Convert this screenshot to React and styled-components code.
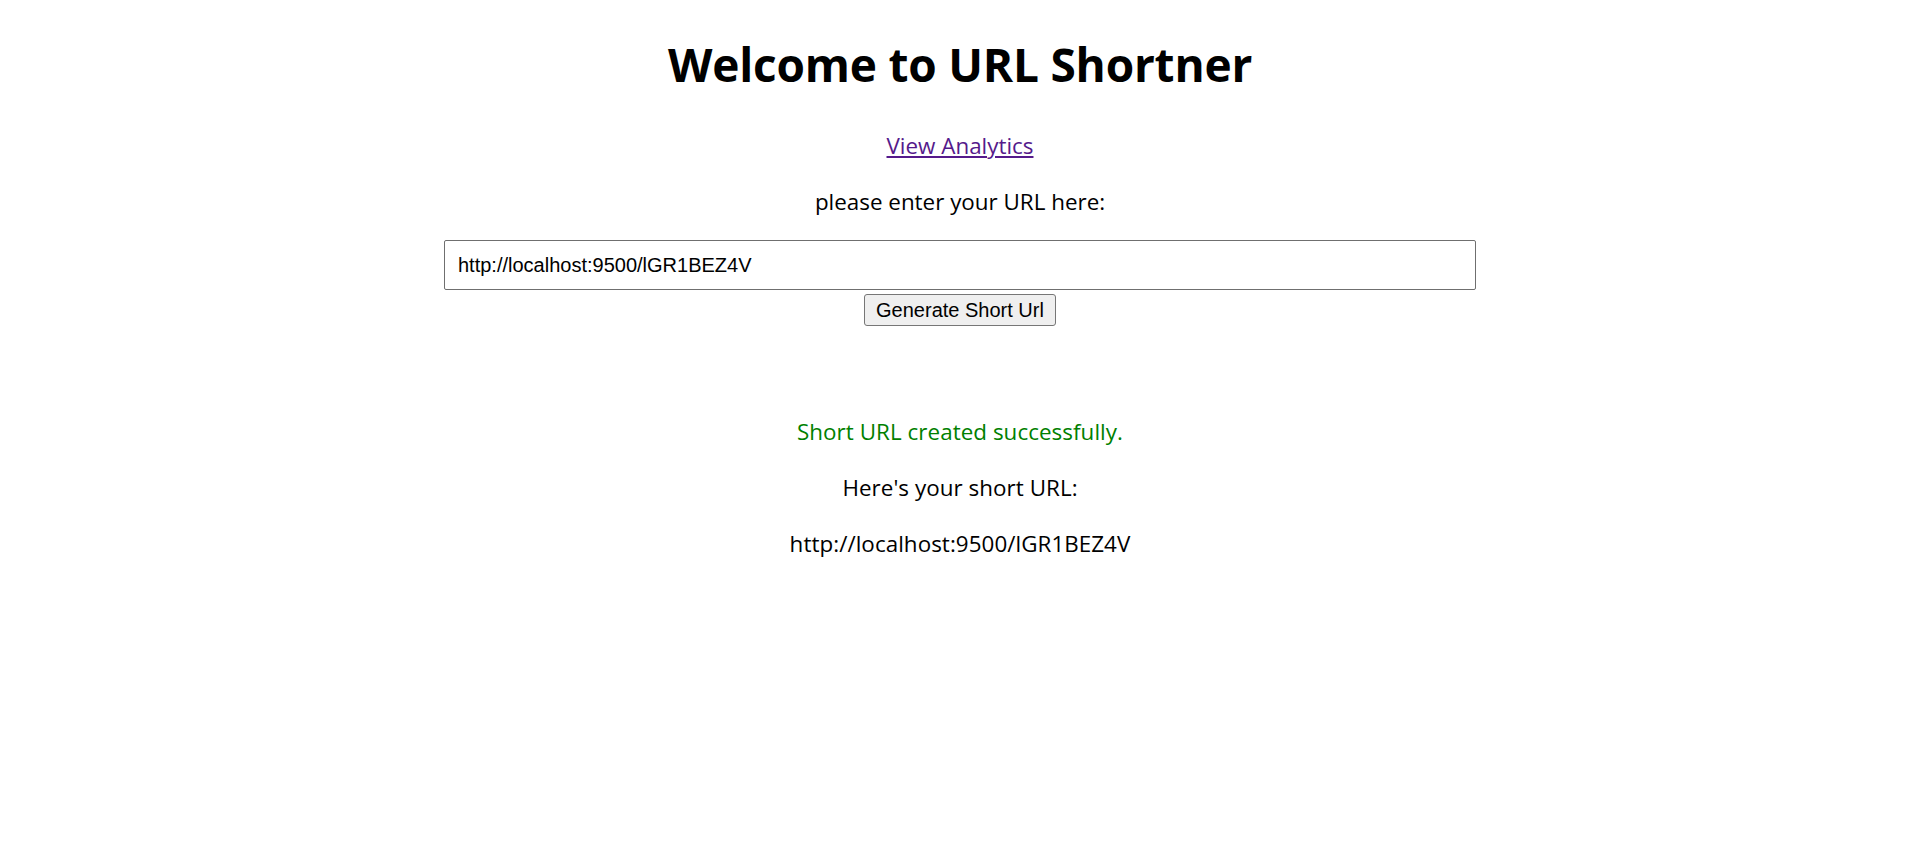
import React from "react";
import styled, { createGlobalStyle } from "styled-components";

const GlobalStyle = createGlobalStyle`
  html, body {
    margin: 0;
    padding: 0;
    background: #ffffff;
  }
  body {
    font-family: "Open Sans", "Noto Sans", sans-serif;
    color: #000000;
  }
`;

const Page = styled.main`
  display: flex;
  flex-direction: column;
  align-items: center;
  padding: 32px 12px 40px;
  text-align: center;
`;

const Title = styled.h1`
  margin: 0 0 34px;
  font-size: 46px;
  font-weight: 700;
  line-height: 64px;
  letter-spacing: -0.2px;
`;

const AnalyticsLink = styled.a`
  display: block;
  font-size: 22.4px;
  line-height: 32px;
  color: #551a8b;
  text-decoration: underline;
  text-underline-offset: 2px;
`;

const Prompt = styled.p`
  margin: 24px 0 22px;
  font-size: 22.4px;
  line-height: 32px;
`;

const PromptLabel = styled.label`
  font-size: inherit;
`;

const Form = styled.form`
  display: flex;
  flex-direction: column;
  align-items: center;
  gap: 4px;
`;

const UrlInput = styled.input`
  box-sizing: border-box;
  width: 1032px;
  height: 50px;
  padding: 0 13px;
  border: 1px solid #6f6f6f;
  border-radius: 2px;
  font-family: "Liberation Sans", Arial, sans-serif;
  font-size: 20px;
  color: #000000;
  background: #ffffff;
  outline: none;
`;

const SubmitButton = styled.button`
  box-sizing: border-box;
  height: 32px;
  padding: 0 11px;
  border: 1px solid #767676;
  border-radius: 3px;
  background: #efefef;
  font-family: "Liberation Sans", Arial, sans-serif;
  font-size: 20px;
  color: #000000;
  cursor: pointer;
`;

const Result = styled.section`
  display: flex;
  flex-direction: column;
  align-items: center;
  gap: 24px;
  margin-top: 90px;
`;

const Message = styled.p`
  margin: 0;
  font-size: 22.4px;
  line-height: 32px;
  letter-spacing: 0.05px;
  color: ${(p) => (p.$success ? "#008000" : "#000000")};
`;

export default function App() {
  const shortUrl = "http://localhost:9500/lGR1BEZ4V";
  return (
    <>
      <GlobalStyle />
      <Page>
        <Title>Welcome to URL Shortner</Title>
        <AnalyticsLink href="#analytics">View Analytics</AnalyticsLink>
        <Prompt>
          <PromptLabel htmlFor="url">please enter your URL here:</PromptLabel>
        </Prompt>
        <Form onSubmit={(e) => e.preventDefault()}>
          <UrlInput id="url" type="text" defaultValue={shortUrl} />
          <SubmitButton type="submit">Generate Short Url</SubmitButton>
        </Form>
        <Result>
          <Message $success>Short URL created successfully.</Message>
          <Message>Here's your short URL:</Message>
          <Message>{shortUrl}</Message>
        </Result>
      </Page>
    </>
  );
}
